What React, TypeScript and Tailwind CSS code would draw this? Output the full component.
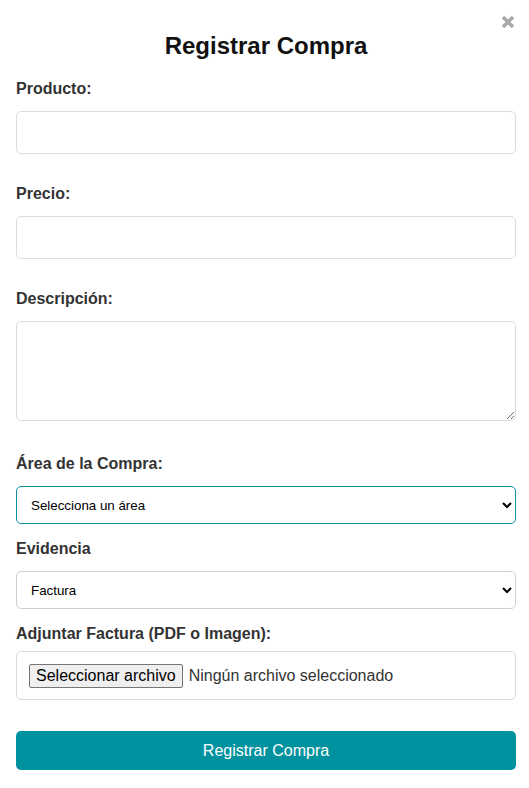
import React from "react";

export default function App() {
  return (
    <div className="relative min-h-screen bg-white pl-4 pr-[13px] font-['Liberation_Sans',Arial,sans-serif]">
      <button
        type="button"
        aria-label="Cerrar"
        className="absolute right-[14px] top-[15px] h-[14px] w-[14px]"
      >
        <svg viewBox="0 0 14 14" width="14" height="14">
          <path d="M2 2 L12 12 M12 2 L2 12" stroke="#a9a9a9" strokeWidth="3.6" strokeLinecap="butt" />
        </svg>
      </button>

      <h2 className="pt-[32px] text-center text-[24px] font-bold leading-[27px] text-[#111]">
        Registrar Compra
      </h2>

      <form className="mt-[21px] flex flex-col">
        <label className="block text-base font-bold leading-[18px] text-[#333]">Producto:</label>
        <input
          type="text"
          className="mt-[13px] block h-[43px] w-full rounded-[5px] border border-[#dcdcdc] px-3 text-base"
        />

        <label className="mt-[31px] block text-base font-bold leading-[18px] text-[#333]">Precio:</label>
        <input
          type="text"
          className="mt-[13px] block h-[43px] w-full rounded-[5px] border border-[#dcdcdc] px-3 text-base"
        />

        <label className="mt-[31px] block text-base font-bold leading-[18px] text-[#333]">Descripción:</label>
        <textarea className="mt-[13px] block h-[100px] w-full resize-y rounded-[5px] border border-[#dcdcdc] px-3 py-2 text-base" />

        <label className="mt-[34px] block text-base font-bold leading-[18px] text-[#333]">Área de la Compra:</label>
        <select
          defaultValue=""
          className="mt-[13px] block h-[38px] w-full rounded-[5px] border border-[#0a929f] pl-[10px] pr-[4px] text-[13.333px] text-black"
        >
          <option value="">Selecciona un área</option>
          <option value="a">Administración</option>
        </select>

        <label className="mt-[16px] block text-base font-bold leading-[18px] text-[#333]">Evidencia</label>
        <select
          defaultValue="factura"
          className="mt-[13px] block h-[38px] w-full rounded-[5px] border border-[#cfcfcf] pl-[10px] pr-[4px] text-[13.333px] text-black"
        >
          <option value="factura">Factura</option>
          <option value="recibo">Recibo</option>
        </select>

        <label className="mt-[16px] block text-base font-bold leading-[18px] text-[#333]">
          Adjuntar Factura (PDF o Imagen):
        </label>
        <div className="mt-[8px] flex h-[49px] w-full items-center rounded-[5px] border border-[#dcdcdc] px-3">
          <span className="inline-flex h-[24px] items-center rounded-[2px] border border-[#767676] bg-[#efefef] px-[6px] text-base leading-none text-black">
            Seleccionar archivo
          </span>
          <span className="ml-[6px] text-base text-[#333]">Ningún archivo seleccionado</span>
        </div>

        <button
          type="button"
          className="mt-[31px] block h-[39px] w-full rounded-[5px] bg-[#00929e] text-base text-white"
        >
          Registrar Compra
        </button>
      </form>
    </div>
  );
}
